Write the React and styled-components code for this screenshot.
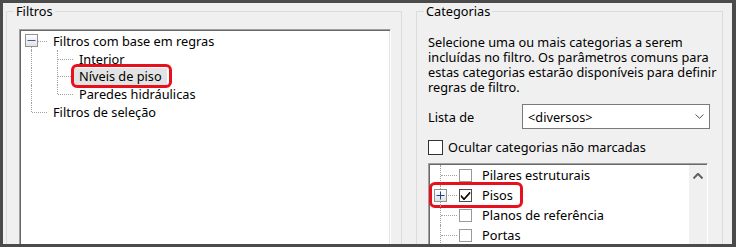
import React from 'react';
import styled, { createGlobalStyle, css } from 'styled-components';

const GlobalStyle = createGlobalStyle`
  html, body { margin: 0; padding: 0; background: #4b4b4b; }
  body {
    width: 736px;
    height: 247px;
    overflow: hidden;
    font-family: "Noto Sans", "Segoe UI", sans-serif;
  }
  #root { height: 247px; overflow: hidden; }
`;

const Window = styled.div`
  margin: 3px 4px 3px 3px;
  height: 241px;
  background: #f0f0f0;
  display: flex;
  align-items: flex-start;
  gap: 14px;
  padding-left: 3px;
  overflow: hidden;
  font-size: 12.75px;
  color: #000;
`;

const Group = styled.fieldset`
  margin: 0;
  padding: 0;
  min-width: 0;
  box-sizing: border-box;
  width: ${(p) => p.$width}px;
  height: 300px;
  border: 1px solid #dcdcdc;
  flex: none;
`;

const Legend = styled.legend`
  margin-left: 7px;
  padding: 0 2px;
  line-height: 16px;
  font-size: 12.75px;
`;

const GroupBody = styled.div`
  padding: ${(p) => p.$pad};
`;

const sunken = css`
  background: #fff;
  border: 1px solid;
  border-color: #a0a0a0 #fff #fff #a0a0a0;
  box-shadow: inset 1px 1px 0 #696969, inset -1px -1px 0 #e3e3e3;
  box-sizing: border-box;
`;

const TreeBox = styled.div`
  ${sunken};
  height: 260px;
  padding: 2px 0 0 1px;
`;

const Row = styled.div`
  display: flex;
  align-items: center;
  height: ${(p) => p.$h}px;
`;

const Guide = styled.div`
  position: relative;
  flex: none;
  width: ${(p) => p.$w || 26}px;
  height: 100%;
  display: flex;
  align-items: center;

  &::before {
    content: '';
    display: ${(p) => (p.$up || p.$down ? 'block' : 'none')};
    position: absolute;
    left: 10px;
    top: ${(p) => (p.$up ? '0' : '50%')};
    bottom: ${(p) => (p.$down ? '0' : '50%')};
    border-left: 1px dotted #a0a0a0;
  }

  &::after {
    content: '';
    display: ${(p) => (p.$branch ? 'block' : 'none')};
    position: absolute;
    left: 11px;
    right: 0;
    top: 50%;
    border-top: 1px dotted #a0a0a0;
  }
`;

const Expander = styled.span`
  position: relative;
  z-index: 1;
  margin-left: 4px;
  width: 13px;
  height: 13px;
  box-sizing: border-box;
  border: 1px solid #919191;
  background: linear-gradient(#ffffff, #e2e2e2);
  display: flex;
  align-items: center;
  justify-content: center;
`;

const Label = styled.span`
  position: relative;
  margin-left: 1px;
  padding: 0 5px;
  height: 100%;
  display: flex;
  align-items: center;
  white-space: nowrap;
  background: ${(p) => (p.$selected ? '#e3e3e3' : 'transparent')};
`;

const Marked = styled.span`
  position: relative;
  display: flex;
  align-items: center;
  height: 100%;

  &::after {
    content: '';
    position: absolute;
    top: ${(p) => p.$t}px;
    bottom: ${(p) => p.$b}px;
    left: ${(p) => p.$l}px;
    right: ${(p) => p.$r}px;
    border: 3px solid #e8101c;
    border-radius: 6px;
    pointer-events: none;
  }
`;

const Description = styled.div`
  line-height: 15px;
  white-space: nowrap;
`;

const FieldRow = styled.div`
  display: flex;
  align-items: center;
  margin-top: ${(p) => p.$mt}px;
  height: ${(p) => p.$h}px;
`;

const FieldLabel = styled.span`
  width: 94px;
  flex: none;
`;

const Combo = styled.div`
  width: 188px;
  height: 25px;
  box-sizing: border-box;
  border: 1px solid #7a7a7a;
  background: #fff;
  display: flex;
  align-items: center;
  justify-content: space-between;
  padding: 0 5px 0 5px;
`;

const CheckBox = styled.span`
  flex: none;
  width: ${(p) => p.$size}px;
  height: ${(p) => p.$size}px;
  box-sizing: border-box;
  border: 1px solid ${(p) => p.$border};
  background: #fff;
  display: flex;
  align-items: center;
  justify-content: center;
  margin-left: ${(p) => p.$ml || 0}px;
`;

const CheckText = styled.span`
  margin-left: ${(p) => p.$ml}px;
  white-space: nowrap;
`;

const CatList = styled.div`
  ${sunken};
  margin-top: 8px;
  width: 280px;
  height: 120px;
  display: flex;
  padding: 1px 0 0 1px;
`;

const CatRows = styled.div`
  flex: 1;
`;

const ScrollBar = styled.div`
  width: 18px;
  flex: none;
  background: #f0f0f0;
  display: flex;
  justify-content: center;
  align-items: flex-start;
  padding-top: 8px;
  box-sizing: border-box;
`;

const Minus = () => (
  <svg width="11" height="11" viewBox="0 0 11 11">
    <line x1="1.5" y1="5.5" x2="9.5" y2="5.5" stroke="#3a5cb4" strokeWidth="1" />
  </svg>
);

const Plus = () => (
  <svg width="11" height="11" viewBox="0 0 11 11">
    <line x1="1.5" y1="5.5" x2="9.5" y2="5.5" stroke="#1f3f8f" strokeWidth="1" />
    <line x1="5.5" y1="1.5" x2="5.5" y2="9.5" stroke="#1f3f8f" strokeWidth="1" />
  </svg>
);

const Check = () => (
  <svg width="11" height="11" viewBox="0 0 11 11">
    <path d="M1.3 5.4 L4 8.6 L9.8 2 L9.8 3.6 L4 10 L1.3 7 Z" fill="#000" stroke="#000" strokeWidth="0.8" strokeLinejoin="miter" />
  </svg>
);

const Chevron = ({ up, color, w, h, sw }) => (
  <svg width={w} height={h} viewBox={`0 0 ${w} ${h}`}>
    <polyline
      points={up ? `0.5,${h - 0.5} ${w / 2},0.8 ${w - 0.5},${h - 0.5}` : `0.5,0.5 ${w / 2},${h - 0.8} ${w - 0.5},0.5`}
      fill="none"
      stroke={color}
      strokeWidth={sw}
    />
  </svg>
);

const H_LEFT = 17.75;
const H_RIGHT = 20;

export default function App() {
  return (
    <>
      <GlobalStyle />
      <Window>
        <Group $width={396}>
          <Legend>Filtros</Legend>
          <GroupBody $pad="10px 10px 0 12px">
            <TreeBox>
              <Row $h={H_LEFT}>
                <Guide $down $branch>
                  <Expander>
                    <Minus />
                  </Expander>
                </Guide>
                <Label>Filtros com base em regras</Label>
              </Row>
              <Row $h={H_LEFT}>
                <Guide $up $down />
                <Guide $up $down $branch />
                <Label>Interior</Label>
              </Row>
              <Row $h={H_LEFT}>
                <Guide $up $down />
                <Guide $up $down $branch />
                <Marked $t={-4} $b={-3} $l={-2} $r={-5}>
                  <Label $selected>Níveis de piso</Label>
                </Marked>
              </Row>
              <Row $h={H_LEFT}>
                <Guide $up $down />
                <Guide $up $branch />
                <Label>Paredes hidráulicas</Label>
              </Row>
              <Row $h={H_LEFT}>
                <Guide $up $branch />
                <Label>Filtros de seleção</Label>
              </Row>
            </TreeBox>
          </GroupBody>
        </Group>

        <Group $width={307}>
          <Legend>Categorias</Legend>
          <GroupBody $pad="16px 0 0 11px">
            <Description>
              Selecione uma ou mais categorias a serem
              <br />
              incluídas no filtro. Os parâmetros comuns para
              <br />
              estas categorias estarão disponíveis para definir
              <br />
              regras de filtro.
            </Description>
            <FieldRow $mt={9} $h={25}>
              <FieldLabel>Lista de</FieldLabel>
              <Combo>
                <span>&lt;diversos&gt;</span>
                <Chevron color="#555" w={9} h={5} sw={1} />
              </Combo>
            </FieldRow>
            <FieldRow $mt={10} $h={16}>
              <CheckBox $size={15} $border="#333" />
              <CheckText $ml={5}>Ocultar categorias não marcadas</CheckText>
            </FieldRow>
            <CatList>
              <CatRows>
                <Row $h={H_RIGHT}>
                  <Guide $w={27} $up $down $branch />
                  <CheckBox $size={13} $border="#999" $ml={2} />
                  <CheckText $ml={10}>Pilares estruturais</CheckText>
                </Row>
                <Row $h={H_RIGHT}>
                  <Marked $t={-3} $b={-3} $l={-1} $r={-10}>
                    <Guide $w={27} $up $down $branch>
                      <Expander>
                        <Plus />
                      </Expander>
                    </Guide>
                    <CheckBox $size={13} $border="#4a4a4a" $ml={2}>
                      <Check />
                    </CheckBox>
                    <CheckText $ml={10}>Pisos</CheckText>
                  </Marked>
                </Row>
                <Row $h={H_RIGHT}>
                  <Guide $w={27} $up $down $branch />
                  <CheckBox $size={13} $border="#999" $ml={2} />
                  <CheckText $ml={10}>Planos de referência</CheckText>
                </Row>
                <Row $h={H_RIGHT}>
                  <Guide $w={27} $up $down $branch />
                  <CheckBox $size={13} $border="#999" $ml={2} />
                  <CheckText $ml={10}>Portas</CheckText>
                </Row>
              </CatRows>
              <ScrollBar>
                <Chevron up color="#606060" w={10} h={6} sw={2} />
              </ScrollBar>
            </CatList>
          </GroupBody>
        </Group>
      </Window>
    </>
  );
}
